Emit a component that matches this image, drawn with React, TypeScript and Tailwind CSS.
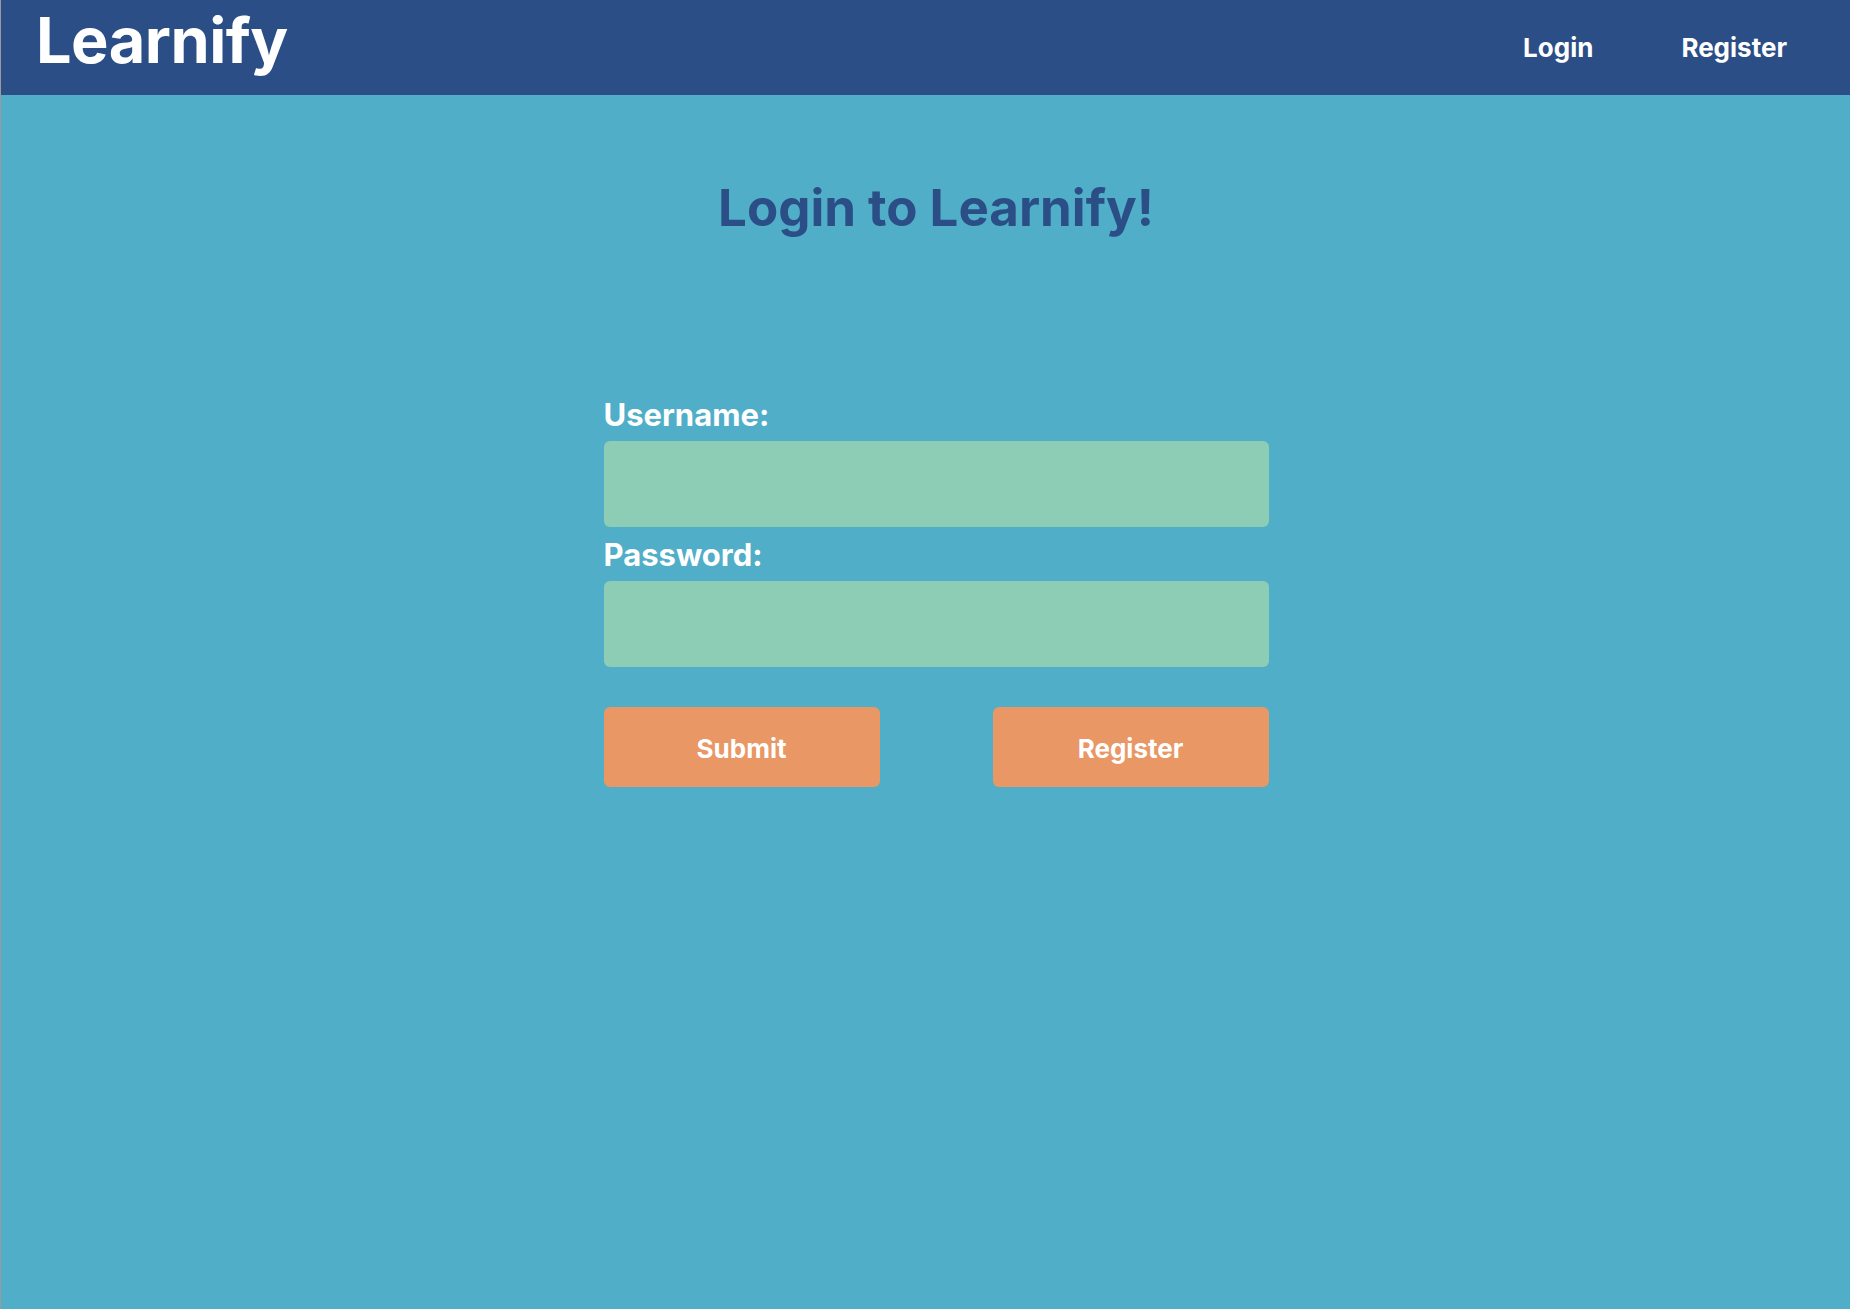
import React, { useState } from "react";

const App: React.FC = () => {
  const [username, setUsername] = useState("");
  const [password, setPassword] = useState("");

  return (
    <div
      className="min-h-screen bg-[#50aec8] border-l border-[#9a9a9a] flex flex-col"
      style={{ fontFamily: "Inter, 'Noto Sans', sans-serif" }}
    >
      {/* Header */}
      <header className="h-[95px] bg-[#2a4e85] flex items-center justify-between pl-[35px] pr-[63px]">
        <a href="#" className="text-white text-[63px] font-bold leading-none pb-[15px] tracking-[-0.5px]">
          Learnify
        </a>
        <nav className="flex items-center gap-[88px] text-white text-[26px] font-bold">
          <a href="#">Login</a>
          <a href="#">Register</a>
        </nav>
      </header>

      {/* Main */}
      <main className="flex flex-col items-center pl-[21px]">
        <h1 className="mt-[81px] text-[51px] leading-[63px] font-bold text-[#2a4e85]">Login to Learnify!</h1>

        <form className="mt-[159px] w-[665px] flex flex-col" onSubmit={(e) => e.preventDefault()}>
          <label className="text-white text-[31px] font-bold leading-[34px] mb-[9px]">Username:</label>
          <input
            type="text"
            value={username}
            onChange={(e) => setUsername(e.target.value)}
            className="h-[86px] rounded-md bg-[#8ecdb5] px-4 text-2xl outline-none"
          />
          <label className="text-white text-[31px] font-bold leading-[34px] mt-[11px] mb-[9px]">Password:</label>
          <input
            type="password"
            value={password}
            onChange={(e) => setPassword(e.target.value)}
            className="h-[86px] rounded-md bg-[#8ecdb5] px-4 text-2xl outline-none"
          />
          <div className="mt-[40px] flex justify-between">
            <button type="submit" className="w-[276px] h-[80px] pt-[3px] rounded-md bg-[#e89765] text-white text-[26px] font-bold">
              Submit
            </button>
            <button type="button" className="w-[276px] h-[80px] pt-[3px] rounded-md bg-[#e89765] text-white text-[26px] font-bold">
              Register
            </button>
          </div>
        </form>
      </main>
    </div>
  );
};

export default App;
